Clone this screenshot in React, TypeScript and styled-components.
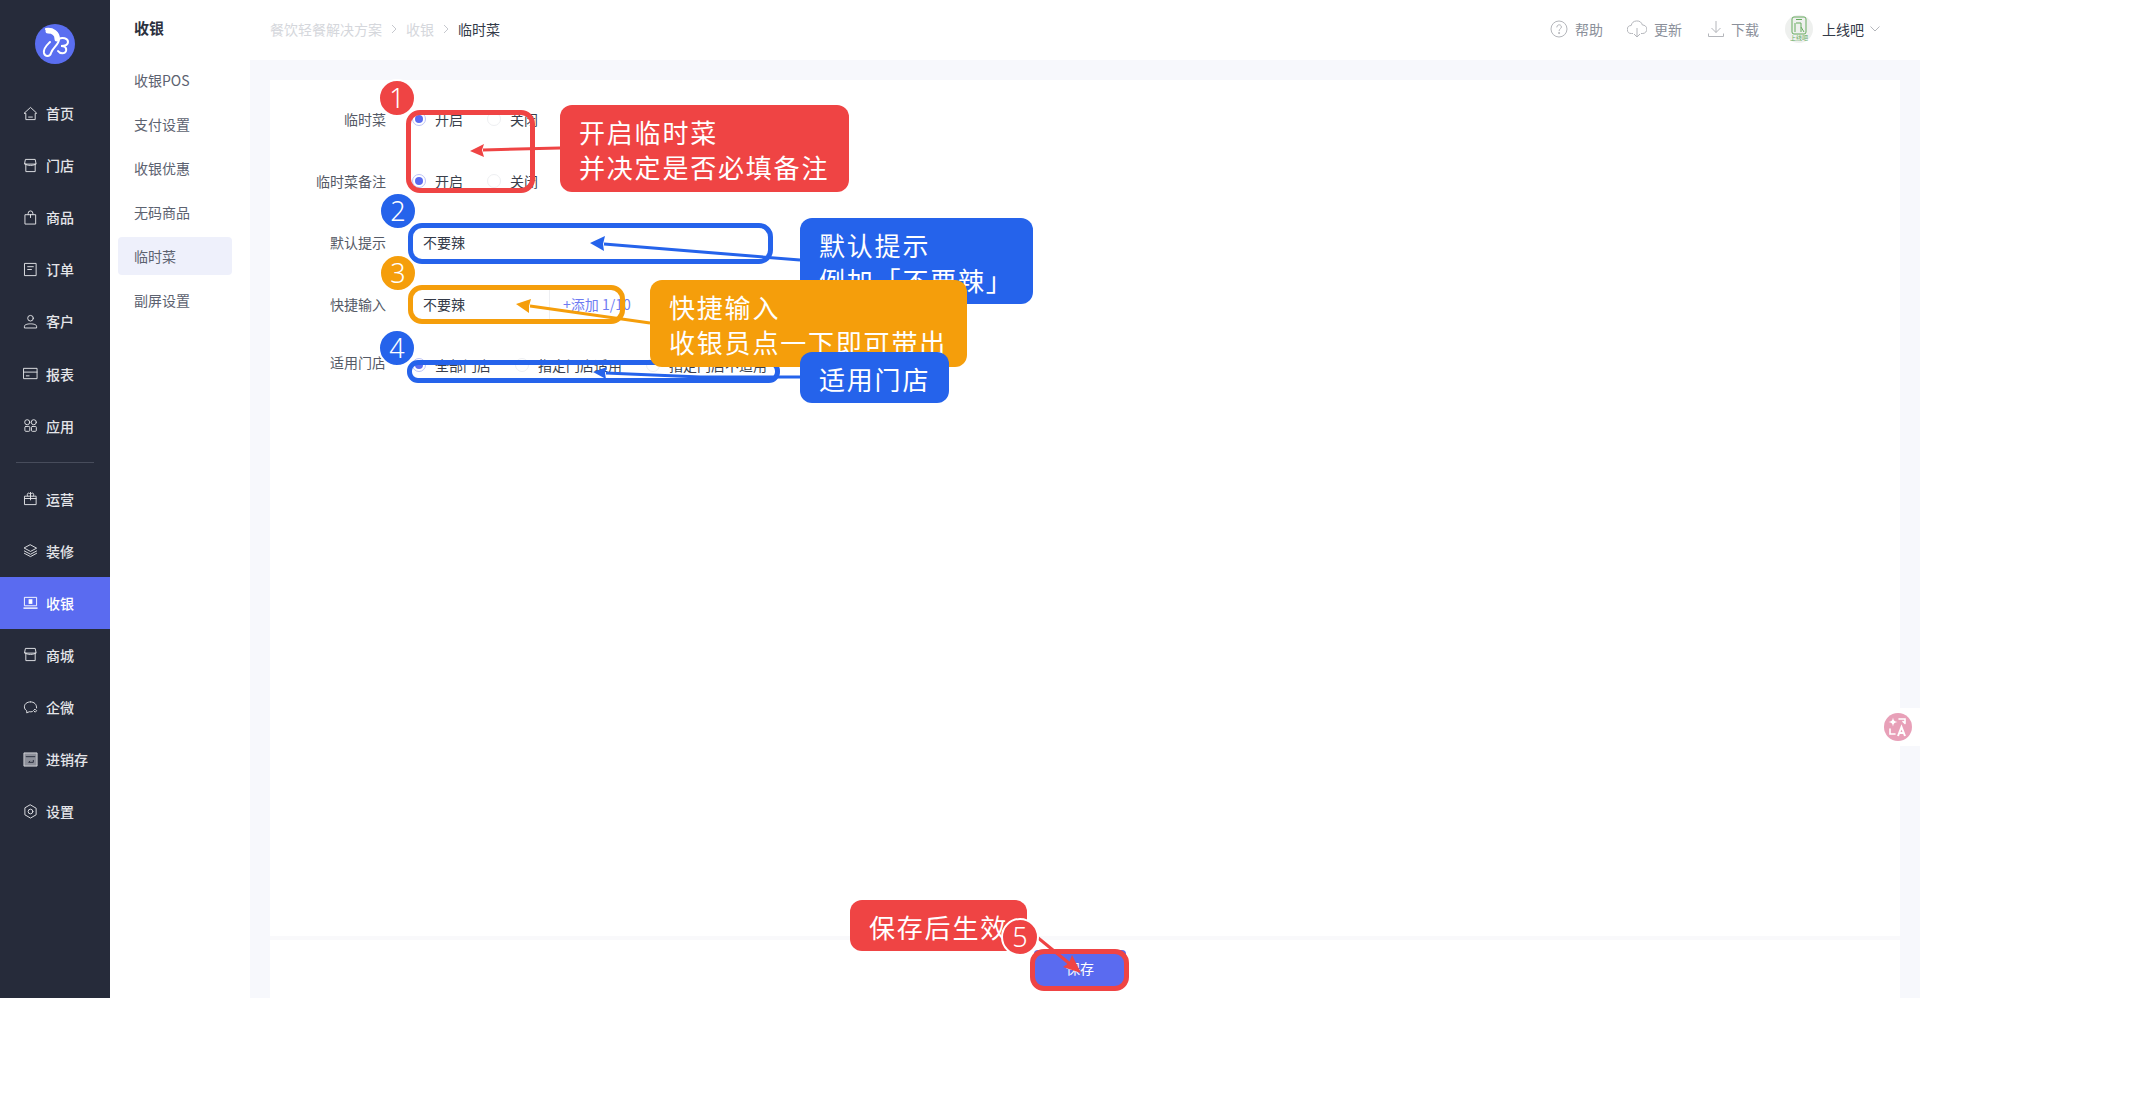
import React from 'react'
import styled, { createGlobalStyle } from 'styled-components'

const GlobalStyle = createGlobalStyle`
    html, body {
        margin: 0;
        padding: 0;
        background: #fff;
        font-family: "Noto Sans CJK SC", "Noto Sans", sans-serif;
    }
    * { box-sizing: border-box; }
`

const Frame = styled.div`
    position: relative;
    display: flex;
    width: 1920px;
    height: 998px;
    overflow: hidden;
`

const Sidebar = styled.aside`
    width: 110px;
    flex-shrink: 0;
    background: #262b3a;
    color: #e4e5e9;
`

const LogoWrap = styled.div`
    height: 87px;
    display: flex;
    justify-content: center;
    padding-top: 24px;
`

const NavItem = styled.div<{ $active?: boolean }>`
    height: 52.1px;
    display: flex;
    align-items: center;
    gap: 8px;
    padding-left: 23px;
    font-size: 14px;
    font-weight: 500;
    white-space: nowrap;
    color: ${({ $active }) => ($active ? '#fff' : '#e4e5e9')};
    background: ${({ $active }) => ($active ? '#5a6bf0' : 'transparent')};
    svg { width: 15px; height: 15px; flex-shrink: 0; }
`

const NavDivider = styled.div`
    height: 1px;
    margin: 10px 16px 10px;
    background: #474c5b;
`

const SubNav = styled.nav`
    width: 140px;
    flex-shrink: 0;
    padding: 0 18px 0 8px;
    background: #fff;
`

const SubTitle = styled.div`
    height: 56px;
    line-height: 56px;
    padding-left: 16px;
    font-size: 15px;
    font-weight: 700;
    color: #2c3140;
`

const SubList = styled.div`
    margin-top: 5px;
    display: flex;
    flex-direction: column;
    gap: 6px;
`

const SubItem = styled.div<{ $active?: boolean }>`
    height: 38px;
    line-height: 38px;
    padding-left: 16px;
    border-radius: 4px;
    font-size: 14px;
    color: #5c6270;
    background: ${({ $active }) => ($active ? '#eef0fb' : 'transparent')};
`

const MainColumn = styled.div`
    flex: 1;
    display: flex;
    flex-direction: column;
    min-width: 0;
`

const TopBar = styled.header`
    height: 60px;
    flex-shrink: 0;
    display: flex;
    align-items: center;
    justify-content: space-between;
    padding: 0 40px 2px 20px;
    background: #fff;
`

const Crumbs = styled.div`
    display: flex;
    align-items: center;
    gap: 8px;
    font-size: 14px;
    color: #d5d7dc;
    svg { width: 8px; height: 10px; }
`

const CrumbCurrent = styled.span`
    color: #333a48;
`

const TopActions = styled.div`
    display: flex;
    align-items: center;
    font-size: 14px;
    color: #8b909a;
`

const TopAction = styled.div<{ $gap: number }>`
    display: flex;
    align-items: center;
    gap: 7px;
    margin-right: ${({ $gap }) => $gap}px;
    svg { display: block; }
`

const Avatar = styled.div`
    width: 28px;
    height: 28px;
    border-radius: 50%;
    background: #eef0ee;
    display: flex;
    align-items: center;
    justify-content: center;
    margin-right: 9px;
`

const UserName = styled.span`
    color: #333a48;
    margin-right: 6px;
`

const Content = styled.main`
    flex: 1;
    display: flex;
    padding: 20px 20px 0;
    background: #f7f8fc;
    min-height: 0;
`

const Card = styled.section`
    flex: 1;
    display: flex;
    flex-direction: column;
    background: #fff;
`

const Form = styled.div`
    flex: 1;
    padding-top: 19px;
`

const FormRow = styled.div`
    display: flex;
    align-items: center;
    height: 40px;
    margin-bottom: 21.5px;
`

const RowLabel = styled.div<{ $lift?: boolean }>`
    width: 116px;
    text-align: right;
    font-size: 14px;
    color: #555a66;
    margin-right: 26px;
    margin-bottom: ${({ $lift }) => ($lift ? '6px' : '0')};
`

const RadioGroup = styled.div`
    display: flex;
    align-items: center;
    gap: 24px;
`

const RadioOption = styled.label`
    display: flex;
    align-items: center;
    gap: 9px;
    font-size: 14px;
    color: #3a3f4c;
`

const RadioMark = styled.span<{ $on?: boolean }>`
    width: 14px;
    height: 14px;
    border-radius: 50%;
    border: 1px solid ${({ $on }) => ($on ? '#bcc3f6' : '#eeeff2')};
    display: flex;
    align-items: center;
    justify-content: center;
    &::after {
        content: '';
        width: 8px;
        height: 8px;
        border-radius: 50%;
        background: ${({ $on }) => ($on ? '#5a6bf0' : 'transparent')};
    }
`

const TextField = styled.div<{ $width: number }>`
    width: ${({ $width }) => $width}px;
    height: 32px;
    display: flex;
    align-items: center;
    padding-left: 11px;
    font-size: 14px;
    color: #333a48;
`

const AddButton = styled.div`
    height: 32px;
    line-height: 32px;
    margin-left: 0;
    padding-left: 13px;
    border-left: 1px solid #eeeff2;
    font-size: 14px;
    color: #6e7cf2;
    white-space: nowrap;
`

const Footer = styled.footer`
    height: 62px;
    flex-shrink: 0;
    border-top: 4px solid #f9f9fb;
    display: flex;
    justify-content: center;
    padding: 10px 10px 0 0;
`

const SaveButton = styled.button`
    width: 92px;
    height: 36px;
    border: 0;
    border-radius: 4px;
    background: #5a6bf0;
    color: #fff;
    font-family: inherit;
    font-size: 14px;
`

const TranslateTab = styled.div`
    position: absolute;
    left: 1880px;
    top: 708px;
    width: 40px;
    height: 38px;
    padding: 5px 0 0 4px;
    background: #fff;
    border-radius: 19px 0 0 19px;
    z-index: 1;
`

const TranslateDot = styled.div`
    width: 28px;
    height: 28px;
    border-radius: 50%;
    background: #e8a0b8;
    display: flex;
    align-items: center;
    justify-content: center;
`

/* annotations laid over the screenshot */
const MarkBox = styled.div<{ $x: number; $y: number; $w: number; $h: number; $c: string; $r?: number }>`
    position: absolute;
    left: ${({ $x }) => $x}px;
    top: ${({ $y }) => $y}px;
    width: ${({ $w }) => $w}px;
    height: ${({ $h }) => $h}px;
    border: 5px solid ${({ $c }) => $c};
    border-radius: ${({ $r }) => $r ?? 14}px;
`

const ArrowLayer = styled.svg`
    position: absolute;
    left: 0;
    top: 0;
    width: 1920px;
    height: 998px;
    pointer-events: none;
`

const Callout = styled.div<{ $x: number; $y: number; $w: number; $h: number; $c: string }>`
    position: absolute;
    left: ${({ $x }) => $x}px;
    top: ${({ $y }) => $y}px;
    width: ${({ $w }) => $w}px;
    height: ${({ $h }) => $h}px;
    padding: 9px 0 0 19px;
    border-radius: 12px;
    background: ${({ $c }) => $c};
    color: #fff;
    font-size: 26px;
    line-height: 35px;
    letter-spacing: 1.8px;
    white-space: pre-line;
    overflow: hidden;
`

const Badge = styled.div<{ $x: number; $y: number; $c: string }>`
    position: absolute;
    left: ${({ $x }) => $x - 19}px;
    top: ${({ $y }) => $y - 19}px;
    width: 38px;
    height: 38px;
    border-radius: 50%;
    border: 2px solid #fff;
    background: ${({ $c }) => $c};
    color: #fff;
    font-family: "Noto Sans", sans-serif;
    font-size: 27px;
    font-weight: 300;
    line-height: 33px;
    text-align: center;
`

const Stroke = (props: React.SVGProps<SVGSVGElement>) => (
    <svg viewBox="0 0 16 16" fill="none" stroke="currentColor" strokeWidth="1" strokeLinejoin="round" strokeLinecap="round" {...props} />
)

const icons: Record<string, React.ReactNode> = {
    home: <Stroke><path d="M1.5 7.5 8 1.5l6.5 6v.3H13v6.7H3V7.8H1.5zM6 11.8h4" /></Stroke>,
    store: <Stroke><path d="M3 1.5h10l1 5H2zM3 6.5v8h10v-8M2.5 6.5c1.5 2 9.500 2 11 0" /></Stroke>,
    bag: <Stroke><path d="M2.500 5h11v10h-11zM5.500 5V3.500a2.500 2.500 0 0 1 5 0V5M8 5v3" /></Stroke>,
    order: <Stroke><path d="M2 1.500h12v13H2zM5 5h6M5 8h4" /></Stroke>,
    user: <Stroke><circle cx="8" cy="4.500" r="3" /><path d="M1.500 14.500v-1.500c0-1.500 3-2.500 6.500-2.500s6.500 1 6.500 2.500v1.500z" /></Stroke>,
    report: <Stroke><path d="M1 2.500h14v11H1zM1 6.500h14M3.500 10.500h3" /></Stroke>,
    apps: <Stroke><circle cx="4.500" cy="4.500" r="2.700" /><circle cx="11.500" cy="4.500" r="2.700" /><rect x="2" y="9" width="5.200" height="5.200" rx="1" /><rect x="9" y="9" width="5.200" height="5.200" rx="1" /></Stroke>,
    gift: <Stroke><path d="M2 5.500h12v9H2zM8 1.500v8M2 8h12M5 5.500C3.500 3 5.500 .800 8 3.500c2.500-2.700 4.500-.500 3 2" /></Stroke>,
    layers: <Stroke><path d="M8 2 14.500 5.500 8 9 1.500 5.500zM1.500 8.500 8 12l6.500-3.500M1.500 11 8 14.500l6.500-3.500" /></Stroke>,
    cash: <svg viewBox="0 0 16 16" fill="none" stroke="currentColor"><path d="M1.500 2.500h13v9h-13z" /><rect x="6" y="4.500" width="4" height="5" fill="currentColor" stroke="none" /><path d="M.500 14h15" strokeWidth="1.500" /></svg>,
    chat: <Stroke><path d="M8 2C4 2 1.500 4.300 1.500 7.300c0 1.800 1 3.300 2.500 4.200v2.300l2.600-1.300c1.100.2 2.400.2 3.400-.1M14.500 8.500C14.700 4.500 12 2 8 2" /><path d="m13 10 1.500 1.500L13 13l-1.500-1.500z" /></Stroke>,
    stock: <svg viewBox="0 0 16 16"><path d="M1 1h14v14H1z" fill="#8d909a" stroke="#d8d9dd" /><path d="M3 4.500h10v1H3z" fill="#262b3a" /><path d="M6 11h5V8.500M6 11l1.500-1.500" fill="none" stroke="#262b3a" /></svg>,
    setting: <Stroke><path d="M8 1 14 4.500v7L8 15l-6-3.500v-7z" /><circle cx="8" cy="8" r="2.500" /></Stroke>,
}

const navTop = [
    { icon: 'home', label: '首页' },
    { icon: 'store', label: '门店' },
    { icon: 'bag', label: '商品' },
    { icon: 'order', label: '订单' },
    { icon: 'user', label: '客户' },
    { icon: 'report', label: '报表' },
    { icon: 'apps', label: '应用' },
]

const navBottom = [
    { icon: 'gift', label: '运营' },
    { icon: 'layers', label: '装修' },
    { icon: 'cash', label: '收银', active: true },
    { icon: 'store', label: '商城' },
    { icon: 'chat', label: '企微' },
    { icon: 'stock', label: '进销存' },
    { icon: 'setting', label: '设置' },
]

const subItems = ['收银POS', '支付设置', '收银优惠', '无码商品', '临时菜', '副屏设置']

const arrows = [
    { points: '560,148 483,150', head: '470,151 484,144 482,150 484,157', color: '#ef4444', width: 3 },
    { points: '800,260 604,244', head: '590,243 605,236 603,244 604,251', color: '#2563eb', width: 3 },
    { points: '650,323 530,306', head: '516,304 531,299 529,306 529,313', color: '#f59e0b', width: 3 },
    { points: '800,377 700,377 606,373', head: '593,372 607,367 605,373 606,379', color: '#2563eb', width: 3 },
    { points: '1037,937 1070,964', head: '1081,973 1063,967 1069,963 1072,955', color: '#ef4444', width: 3 },
]

function Logo() {
    return (
        <svg width="40" height="40" viewBox="0 0 40 40">
            <circle cx="20" cy="20" r="20" fill="#5a6ef0" />
            <path d="M11 5c7-1 13 3 13 10 0 6-6 8-8 14-1 4-6 4-7 0-1-5 3-8 6-11" fill="none" stroke="#fff" strokeWidth="2" strokeLinecap="round" />
            <path d="M13 7c5 0 9 3 9 8" fill="none" stroke="#fff" strokeWidth="5" strokeLinecap="round" />
            <path d="M24 15c3-2 9-1 9 3 0 3-4 4-7 4 3 0 6 1 5 5-1 3-6 3-8 0" fill="none" stroke="#fff" strokeWidth="2" strokeLinecap="round" />
        </svg>
    )
}

const Chevron = () => (
    <svg viewBox="0 0 8 10" fill="none" stroke="#c6c8ce" strokeWidth="1"><path d="m2 1 4 4-4 4" /></svg>
)

function Radio({ on, children }: { on?: boolean; children: React.ReactNode }) {
    return (
        <RadioOption>
            <RadioMark $on={on} />
            {children}
        </RadioOption>
    )
}

export default function App() {
    return (
        <>
            <GlobalStyle />
            <Frame>
                <Sidebar>
                    <LogoWrap><Logo /></LogoWrap>
                    {navTop.map((n) => (
                        <NavItem key={n.label}>{icons[n.icon]}{n.label}</NavItem>
                    ))}
                    <NavDivider />
                    {navBottom.map((n) => (
                        <NavItem key={n.label} $active={n.active}>{icons[n.icon]}{n.label}</NavItem>
                    ))}
                </Sidebar>

                <SubNav>
                    <SubTitle>收银</SubTitle>
                    <SubList>
                        {subItems.map((s) => (
                            <SubItem key={s} $active={s === '临时菜'}>{s}</SubItem>
                        ))}
                    </SubList>
                </SubNav>

                <MainColumn>
                    <TopBar>
                        <Crumbs>
                            <span>餐饮轻餐解决方案</span>
                            <Chevron />
                            <span>收银</span>
                            <Chevron />
                            <CrumbCurrent>临时菜</CrumbCurrent>
                        </Crumbs>
                        <TopActions>
                            <TopAction $gap={24}>
                                <svg width="18" height="18" viewBox="0 0 18 18" fill="none" stroke="#b4b6bb">
                                    <circle cx="9" cy="9" r="8" />
                                    <path d="M6.800 7c0-3 4.600-3 4.600 0 0 1.800-2.300 1.700-2.300 3.700" strokeLinecap="round" />
                                    <circle cx="9.100" cy="13" r=".6" fill="#b4b6bb" />
                                </svg>
                                帮助
                            </TopAction>
                            <TopAction $gap={26}>
                                <svg width="20" height="18" viewBox="0 0 20 18" fill="none" stroke="#b4b6bb">
                                    <path d="M6 13.500H4.500a4 4 0 0 1-.3-8 5.800 5.800 0 0 1 11.200-.5 4.200 4.200 0 0 1 .4 8.500H14" />
                                    <path d="M10 8v9M7 14l3 3 3-3" />
                                </svg>
                                更新
                            </TopAction>
                            <TopAction $gap={26}>
                                <svg width="16" height="18" viewBox="0 0 16 18" fill="none" stroke="#b4b6bb">
                                    <path d="M8 1v11.500M3.500 8 8 12.500 12.500 8M.5 13.500v3h15v-3" />
                                </svg>
                                下载
                            </TopAction>
                            <Avatar>
                                <svg width="24" height="26" viewBox="0 0 24 26" fill="none" stroke="#66ab5e">
                                    <rect x="5" y="1" width="14" height="17" rx="2" />
                                    <path d="M9 3.500h6M9 7h5v9M8 7v9M14 11l3 5" />
                                    <text x="12" y="24" fontSize="6" textAnchor="middle" fill="#66ab5e" stroke="none">上线吧</text>
                                </svg>
                            </Avatar>
                            <UserName>上线吧</UserName>
                            <svg width="10" height="6" viewBox="0 0 10 6" fill="none" stroke="#b4b6bb"><path d="m.5.5 4.500 4.500 4.500-4.500" /></svg>
                        </TopActions>
                    </TopBar>

                    <Content>
                        <Card>
                            <Form>
                                <FormRow>
                                    <RowLabel>临时菜</RowLabel>
                                    <RadioGroup>
                                        <Radio on>开启</Radio>
                                        <Radio>关闭</Radio>
                                    </RadioGroup>
                                </FormRow>
                                <FormRow>
                                    <RowLabel>临时菜备注</RowLabel>
                                    <RadioGroup>
                                        <Radio on>开启</Radio>
                                        <Radio>关闭</Radio>
                                    </RadioGroup>
                                </FormRow>
                                <FormRow>
                                    <RowLabel>默认提示</RowLabel>
                                    <TextField $width={350}>不要辣</TextField>
                                </FormRow>
                                <FormRow>
                                    <RowLabel>快捷输入</RowLabel>
                                    <TextField $width={137}>不要辣</TextField>
                                    <AddButton>+添加 1/10</AddButton>
                                </FormRow>
                                <FormRow>
                                    <RowLabel $lift>适用门店</RowLabel>
                                    <RadioGroup>
                                        <Radio on>全部门店</Radio>
                                        <Radio>指定门店适用</Radio>
                                        <Radio>指定门店不适用</Radio>
                                    </RadioGroup>
                                </FormRow>
                            </Form>
                            <Footer>
                                <SaveButton>保存</SaveButton>
                            </Footer>
                        </Card>
                    </Content>
                </MainColumn>

                <TranslateTab>
                    <TranslateDot>
                        <svg width="22" height="22" viewBox="0 0 22 22" fill="none" stroke="#fff" strokeWidth="1.600">
                            <path d="M6 1.500c.5 3 1.500 4 4.500 4.500-3 .5-4 1.500-4.500 4.500C5.500 7.500 4.500 6.500 1.500 6c3-.5 4-1.500 4.500-4.500z" fill="#fff" stroke="none" />
                            <path d="M12 3h6v4M16 5.500 18 7.500M3 13v5h5" strokeLinecap="round" />
                            <path d="m11 20 3.500-9 3.500 9M12 17h5" strokeWidth="2" />
                        </svg>
                    </TranslateDot>
                </TranslateTab>

                <MarkBox $x={406} $y={110} $w={129} $h={83} $c="#ef4444" />
                <MarkBox $x={408} $y={223} $w={365} $h={41} $c="#2563eb" />
                <MarkBox $x={408} $y={285} $w={217} $h={39} $c="#f59e0b" />
                <MarkBox $x={407} $y={360} $w={373} $h={23} $c="#2563eb" $r={11} />
                <MarkBox $x={1030} $y={949} $w={99} $h={42} $c="#ef4444" />

                <ArrowLayer viewBox="0 0 1920 998">
                    {arrows.map((a) => (
                        <g key={a.points}>
                            <polyline points={a.points} fill="none" stroke={a.color} strokeWidth={a.width} />
                            <polygon points={a.head} fill={a.color} />
                        </g>
                    ))}
                </ArrowLayer>

                <Callout $x={560} $y={105} $w={289} $h={87} $c="#ef4444">{'开启临时菜\n并决定是否必填备注'}</Callout>
                <Callout $x={800} $y={218} $w={233} $h={86} $c="#2563eb">{'默认提示\n例加「不要辣」'}</Callout>
                <Callout $x={650} $y={280} $w={317} $h={87} $c="#f59e0b">{'快捷输入\n收银员点一下即可带出'}</Callout>
                <Callout $x={800} $y={352} $w={149} $h={51} $c="#2563eb">适用门店</Callout>
                <Callout $x={850} $y={900} $w={177} $h={51} $c="#ef4444">保存后生效</Callout>

                <Badge $x={397} $y={98} $c="#ef4444">1</Badge>
                <Badge $x={398} $y={211} $c="#2563eb">2</Badge>
                <Badge $x={398} $y={273} $c="#f59e0b">3</Badge>
                <Badge $x={397} $y={348} $c="#2563eb">4</Badge>
                <Badge $x={1020} $y={937} $c="#ef4444">5</Badge>
            </Frame>
        </>
    )
}
